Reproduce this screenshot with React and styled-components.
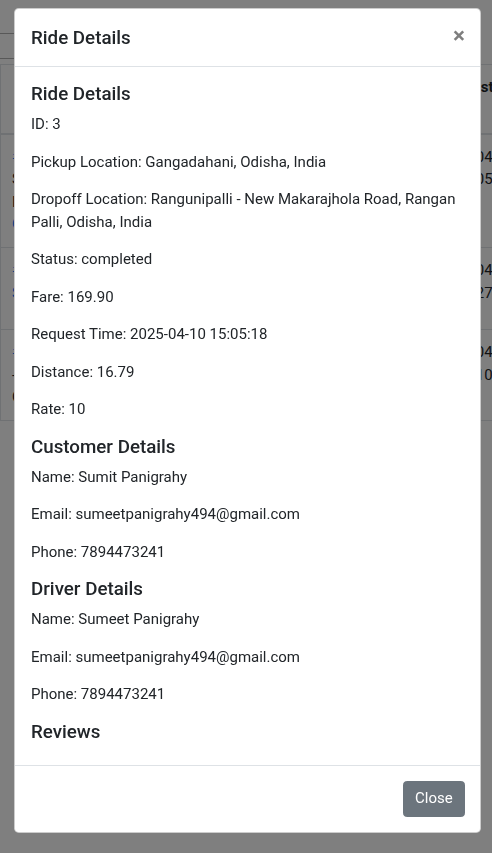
import React from "react";
import styled, { createGlobalStyle } from "styled-components";

const GlobalStyle = createGlobalStyle`
  * { box-sizing: border-box; }
  html { font-size: 15px; }
  body {
    margin: 0;
    font-family: "Segoe UI", Roboto, "Helvetica Neue", Arial, sans-serif;
    font-size: 15px;
    line-height: 1.5;
    color: #212529;
    background: #fff;
    overflow: hidden;
  }
`;

/* ---------- page behind the modal ---------- */

const Page = styled.div`
  width: 100vw;
  height: 100vh;
  overflow: hidden;
`;

const TopRule = styled.div`
  width: 300px;
  height: ${(p) => p.h}px;
  border-bottom: 1px solid #b0b0b0;
`;

const Table = styled.div`
  margin-top: 5px;
  width: 600px;
  border-top: 1px solid #dee2e6;
  border-left: 1px solid #dee2e6;
`;

const TRow = styled.div`
  display: grid;
  grid-template-columns: 200px 226px 174px;
  min-height: ${(p) => p.min || 0}px;
  border-bottom: ${(p) => (p.head ? "2px" : "1px")} solid #dee2e6;
`;

const Cell = styled.div`
  padding: 11.25px 12px 11.25px 11px;
  align-self: ${(p) => p.align || "start"};
  font-weight: ${(p) => (p.head ? 700 : 400)};
  white-space: nowrap;
  color: #212529;
`;

const Link = styled.div`
  color: #007bff;
`;

const Ghost = styled.span`
  visibility: hidden;
`;

const rows = [
  { min: 113, left: [["#1", true], ["Sumit Panigrahy", false], ["Rangunipalli", false], ["Gangadahani", true]], right: ["2025-04-10", "2025-05-10"] },
  { min: 82, left: [["#2", true], ["Sumeet", true]], right: ["2025-04-10", "2025-27-04"] },
  { min: 91, left: [["#3", true], ["-", false], ["Cash", false]], right: ["2025-04-10", "2025-10-04"] },
];

const Background = () => (
  <Page>
    <TopRule h={34} />
    <TopRule h={25} />
    <Table>
      <TRow head>
        <Cell head align="end">ID</Cell>
        <Cell head align="end">Details</Cell>
        <Cell head>
          Request
          <br />
          <Ghost>At</Ghost>
        </Cell>
      </TRow>
      {rows.map((r, i) => (
        <TRow key={i} min={r.min}>
          <Cell>
            {r.left.map(([t, link], j) => (link ? <Link key={j}>{t}</Link> : <div key={j}>{t}</div>))}
          </Cell>
          <Cell />
          <Cell>
            <div>{r.right[0]}</div>
            <div>{r.right[1]}</div>
          </Cell>
        </TRow>
      ))}
    </Table>
  </Page>
);

/* ---------- modal ---------- */

const Backdrop = styled.div`
  position: fixed;
  inset: 0;
  background: rgba(0, 0, 0, 0.5);
`;

const ModalWrap = styled.div`
  position: fixed;
  inset: 0;
  overflow: hidden;
`;

const Dialog = styled.div`
  margin: 8px 11px 8px 14px;
  background: #fff;
  border: 1px solid rgba(0, 0, 0, 0.2);
  border-radius: 4.8px;
  display: flex;
  flex-direction: column;
`;

const Header = styled.div`
  display: flex;
  align-items: flex-start;
  justify-content: space-between;
  padding: 15px 15px 14px 16px;
  border-bottom: 1px solid #dee2e6;
`;

const Title = styled.h5`
  margin: 0;
  font-size: 18.75px;
  font-weight: 500;
  line-height: 1.5;
`;

const CloseX = styled.button`
  background: transparent;
  border: 0;
  padding: 15px;
  margin: -15px -15px -15px auto;
  font-family: inherit;
  font-size: 22.5px;
  font-weight: 700;
  line-height: 1;
  color: #000;
  opacity: 0.5;
  text-shadow: 0 1px 0 #fff;
  cursor: pointer;
`;

const Body = styled.div`
  padding: 16px 15px 14px 16px;
`;

const SectionTitle = styled.h5`
  margin: 0 0 7.5px;
  font-size: 18.75px;
  font-weight: 500;
  line-height: 1.2;
`;

const Line = styled.p`
  margin: 0 0 15px;
  font-size: 15px;
  line-height: 1.5;
`;

const Footer = styled.div`
  display: flex;
  justify-content: flex-end;
  align-items: center;
  padding: 15px;
  border-top: 1px solid #dee2e6;
`;

const Button = styled.button`
  height: 36px;
  font-family: inherit;
  font-size: 15px;
  line-height: 1.5;
  padding: 0 11.25px;
  color: #fff;
  background: #6c757d;
  border: 1px solid #6c757d;
  border-radius: 3.75px;
  cursor: pointer;
`;

const sections = [
  {
    title: "Ride Details",
    lines: [
      "ID: 3",
      "Pickup Location: Gangadahani, Odisha, India",
      "Dropoff Location: Rangunipalli - New Makarajhola Road, Rangan Palli, Odisha, India",
      "Status: completed",
      "Fare: 169.90",
      "Request Time: 2025-04-10 15:05:18",
      "Distance: 16.79",
      "Rate: 10",
    ],
  },
  {
    title: "Customer Details",
    lines: ["Name: Sumit Panigrahy", "Email: sumeetpanigrahy494@gmail.com", "Phone: 7894473241"],
  },
  {
    title: "Driver Details",
    lines: ["Name: Sumeet Panigrahy", "Email: sumeetpanigrahy494@gmail.com", "Phone: 7894473241"],
  },
  { title: "Reviews", lines: [] },
];

const App = () => {
  return (
    <>
      <GlobalStyle />
      <Background />
      <Backdrop />
      <ModalWrap>
        <Dialog>
          <Header>
            <Title>Ride Details</Title>
            <CloseX aria-label="Close">×</CloseX>
          </Header>
          <Body>
            {sections.map((s) => (
              <React.Fragment key={s.title}>
                <SectionTitle>{s.title}</SectionTitle>
                {s.lines.map((l) => (
                  <Line key={l}>{l}</Line>
                ))}
              </React.Fragment>
            ))}
          </Body>
          <Footer>
            <Button>Close</Button>
          </Footer>
        </Dialog>
      </ModalWrap>
    </>
  );
};

export default App;
